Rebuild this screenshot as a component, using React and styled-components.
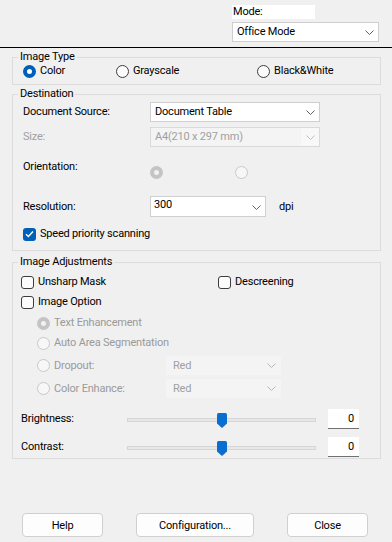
import React from "react";
import styled, { createGlobalStyle, css } from "styled-components";

const FONT = `Roboto, "Liberation Sans", Arial, sans-serif`;

const Global = createGlobalStyle`
  * { box-sizing: border-box; }
  html, body { margin: 0; padding: 0; background: #f0f0f0; }
  body { font-family: ${FONT}; font-size: 11px; letter-spacing: -0.2px; color: #000; }
  #root { width: 392px; height: 542px; }
`;

const Window = styled.div`
  width: 392px;
  height: 542px;
  display: flex;
  flex-direction: column;
  background: #f0f0f0;
  overflow: hidden;
`;

const ModeBar = styled.div`
  height: 47px;
  flex: none;
  display: flex;
  justify-content: flex-end;
  padding: 5px 13px 0 0;
`;

const ModeCol = styled.div`
  width: 147px;
  display: flex;
  flex-direction: column;
  gap: 3px;
`;

const ModeLabel = styled.div`
  width: 83px;
  height: 14px;
  line-height: 14px;
  padding-left: 1px;
  background: #fff;
`;

const Rule = styled.div`
  height: 1px;
  flex: none;
  background: #000;
`;

const Group = styled.fieldset`
  flex: none;
  margin: ${(p) => p.$mt}px 11px 0 12px;
  padding: 0 0 ${(p) => p.$pb}px 0;
  border: 1px solid #dcdcdc;
  min-width: 0;
`;

const Legend = styled.legend`
  margin-left: 5px;
  padding: 0 2px;
  line-height: 14px;
  height: 14px;
`;

const Body = styled.div`
  display: flex;
  flex-direction: column;
  padding-left: ${(p) => p.$pl}px;
`;

const Row = styled.div`
  display: flex;
  align-items: ${(p) => (p.$top ? "flex-start" : "center")};
  height: ${(p) => p.$h}px;
  margin-top: ${(p) => p.$mt || 0}px;
  padding-left: ${(p) => p.$indent || 0}px;
`;

const Label = styled.div`
  flex: none;
  width: ${(p) => (p.$w ? `${p.$w}px` : "auto")};
  line-height: 14px;
  color: ${(p) => (p.$disabled ? "#a0a0a0" : "#000")};
`;

const Unit = styled.span`
  margin-left: 13px;
  line-height: 14px;
`;

const Option = styled.label`
  flex: none;
  display: inline-flex;
  align-items: center;
  gap: 4px;
  width: ${(p) => (p.$w ? `${p.$w}px` : "auto")};
  margin-top: ${(p) => p.$mt || 0}px;
  line-height: 14px;
  color: ${(p) => (p.$disabled ? "#9a9a9a" : "#000")};
`;

const radioStates = {
  on: css`
    background: #fff;
    border: 4px solid #005fb8;
  `,
  off: css`
    background: #fbfbfb;
    border: 1px solid #3c3c3c;
  `,
  disOn: css`
    background: #f2f2f2;
    border: 4px solid #c4c4c4;
  `,
  disOff: css`
    background: #f7f7f7;
    border: 1px solid #c8c8c8;
  `,
};

const RadioDot = styled.span`
  flex: none;
  width: 13px;
  height: 13px;
  border-radius: 50%;
  ${(p) => radioStates[p.$state]}
`;

const CheckBox = styled.span`
  flex: none;
  width: 13px;
  height: 13px;
  border-radius: 3px;
  display: flex;
  align-items: center;
  justify-content: center;
  ${(p) =>
    p.$checked
      ? css`
          background: #005fb8;
        `
      : css`
          background: #fbfbfb;
          border: 1px solid #3c3c3c;
        `}
`;

const comboVariants = {
  normal: css`
    background: #fff;
    border: 1px solid #cfcfcf;
    color: #000;
  `,
  disabled: css`
    background: #f4f4f4;
    border: 1px solid #d9d9d9;
    color: #a0a0a0;
  `,
  flat: css`
    background: #f4f4f4;
    border: 1px solid #f4f4f4;
    color: #a0a0a0;
  `,
};

const Combo = styled.div`
  flex: none;
  width: ${(p) => p.$w}px;
  height: ${(p) => p.$h || 20}px;
  display: flex;
  align-items: ${(p) => (p.$top ? "flex-start" : "center")};
  justify-content: space-between;
  padding: ${(p) => (p.$top ? "1px" : "0")} 0 0 ${(p) => p.$pl ?? 4}px;
  line-height: 14px;
  ${(p) => comboVariants[p.$variant || "normal"]}
`;

const ChevronBox = styled.span`
  align-self: stretch;
  width: ${(p) => p.$w || 18}px;
  display: flex;
  align-items: center;
  justify-content: center;
  background: ${(p) => p.$bg || "transparent"};
`;

const TrackWrap = styled.div`
  flex: none;
  width: 189px;
  height: 4px;
  position: relative;
  background: #e7e7e7;
  border: 1px solid #d6d6d6;
  margin-top: 2px;
`;

const Thumb = styled.svg`
  position: absolute;
  top: -6px;
  transform: translateX(-50%);
`;

const ValueBox = styled.div`
  flex: none;
  width: 31px;
  height: 20px;
  margin-left: 12px;
  background: #fff;
  border-bottom: 1px solid #707070;
  text-align: right;
  padding-right: 5px;
  line-height: 19px;
`;

const ButtonRow = styled.div`
  margin-top: auto;
  flex: none;
  display: flex;
  justify-content: space-between;
  padding: 0 24px 5px 22px;
`;

const Button = styled.button`
  width: ${(p) => p.$w}px;
  height: 24px;
  padding: 0;
  background: #fdfdfd;
  border: 1px solid #d0d0d0;
  border-radius: 4px;
  font-family: ${FONT};
  font-size: 11px;
  letter-spacing: -0.2px;
  color: #000;
`;

const Chevron = ({ color = "#606060" }) => (
  <svg width="9" height="5" viewBox="0 0 9 5">
    <path d="M0.5 0.5 L4.5 4.5 L8.5 0.5" fill="none" stroke={color} strokeWidth="1" />
  </svg>
);

const Check = () => (
  <svg width="9" height="8" viewBox="0 0 9 8">
    <path d="M1 4.2 L3.4 6.5 L8 1.5" fill="none" stroke="#fff" strokeWidth="1.4" />
  </svg>
);

const Radio = ({ state, w, children, disabled, mt }) => (
  <Option $w={w} $disabled={disabled} $mt={mt}>
    <RadioDot $state={state} />
    {children}
  </Option>
);

const Checkbox = ({ checked, w, children }) => (
  <Option $w={w}>
    <CheckBox $checked={checked}>{checked && <Check />}</CheckBox>
    {children}
  </Option>
);

const Select = ({ w, h, variant, value, top, pl, chevW, chevBg, chevColor }) => (
  <Combo $w={w} $h={h} $variant={variant} $top={top} $pl={pl}>
    <span>{value}</span>
    <ChevronBox $w={chevW} $bg={chevBg}>
      <Chevron color={chevColor} />
    </ChevronBox>
  </Combo>
);

const Slider = ({ value, min, max }) => {
  const pct = ((value - min) / (max - min)) * 100;
  return (
    <TrackWrap>
      <Thumb width="10" height="15" viewBox="0 0 10 15" style={{ left: `${pct}%` }}>
        <path d="M0 1.5 Q0 0 1.5 0 H8.5 Q10 0 10 1.5 V10.5 L5 15 L0 10.5 Z" fill="#0a6ed1" />
      </Thumb>
    </TrackWrap>
  );
};

export default function App() {
  return (
    <Window>
      <Global />
      <ModeBar>
        <ModeCol>
          <ModeLabel>Mode:</ModeLabel>
          <Select w={147} value="Office Mode" />
        </ModeCol>
      </ModeBar>
      <Rule />

      <Group $mt={2} $pb={6}>
        <Legend>Image Type</Legend>
        <Body $pl={10}>
          <Row $h={14}>
            <Radio state="on" w={93}>Color</Radio>
            <Radio state="off" w={141}>Grayscale</Radio>
            <Radio state="off">Black&amp;White</Radio>
          </Row>
        </Body>
      </Group>

      <Group $mt={2} $pb={9}>
        <Legend>Destination</Legend>
        <Body $pl={10}>
          <Row $h={20} $mt={1}>
            <Label $w={127}>Document Source:</Label>
            <Select w={170} value="Document Table" />
          </Row>
          <Row $h={20} $mt={5}>
            <Label $w={127} $disabled>Size:</Label>
            <Select
              w={170}
              variant="disabled"
              value="A4(210 x 297 mm)"
              chevBg="#f8f8f8"
              chevColor="#c0c0c0"
            />
          </Row>
          <Row $h={20} $mt={13} $top>
            <Label $w={127}>Orientation:</Label>
            <Radio state="disOn" w={85} disabled mt={6} />
            <Radio state="disOff" disabled mt={6} />
          </Row>
          <Row $h={21} $mt={16}>
            <Label $w={127}>Resolution:</Label>
            <Select w={116} h={21} value="300" top pl={3} />
            <Unit>dpi</Unit>
          </Row>
          <Row $h={14} $mt={10}>
            <Checkbox checked>Speed priority scanning</Checkbox>
          </Row>
        </Body>
      </Group>

      <Group $mt={4} $pb={1}>
        <Legend>Image Adjustments</Legend>
        <Body $pl={8}>
          <Row $h={14} $mt={6}>
            <Checkbox w={197}>Unsharp Mask</Checkbox>
            <Checkbox>Descreening</Checkbox>
          </Row>
          <Row $h={14} $mt={6}>
            <Checkbox>Image Option</Checkbox>
          </Row>
          <Row $h={14} $mt={7} $indent={16}>
            <Radio state="disOn" disabled>Text Enhancement</Radio>
          </Row>
          <Row $h={14} $mt={6} $indent={16}>
            <Radio state="disOff" disabled>Auto Area Segmentation</Radio>
          </Row>
          <Row $h={19} $mt={6} $indent={16}>
            <Radio state="disOff" disabled w={129}>Dropout:</Radio>
            <Select w={115} h={19} variant="flat" value="Red" pl={6} chevColor="#b8b8b8" />
          </Row>
          <Row $h={19} $mt={4} $indent={16}>
            <Radio state="disOff" disabled w={129}>Color Enhance:</Radio>
            <Select w={115} h={19} variant="flat" value="Red" pl={6} chevColor="#b8b8b8" />
          </Row>
          <Row $h={20} $mt={11}>
            <Label $w={106}>Brightness:</Label>
            <Slider value={0} min={-100} max={100} />
            <ValueBox>0</ValueBox>
          </Row>
          <Row $h={20} $mt={8}>
            <Label $w={106}>Contrast:</Label>
            <Slider value={0} min={-100} max={100} />
            <ValueBox>0</ValueBox>
          </Row>
        </Body>
      </Group>

      <ButtonRow>
        <Button $w={81}>Help</Button>
        <Button $w={118}>Configuration...</Button>
        <Button $w={81}>Close</Button>
      </ButtonRow>
    </Window>
  );
}
